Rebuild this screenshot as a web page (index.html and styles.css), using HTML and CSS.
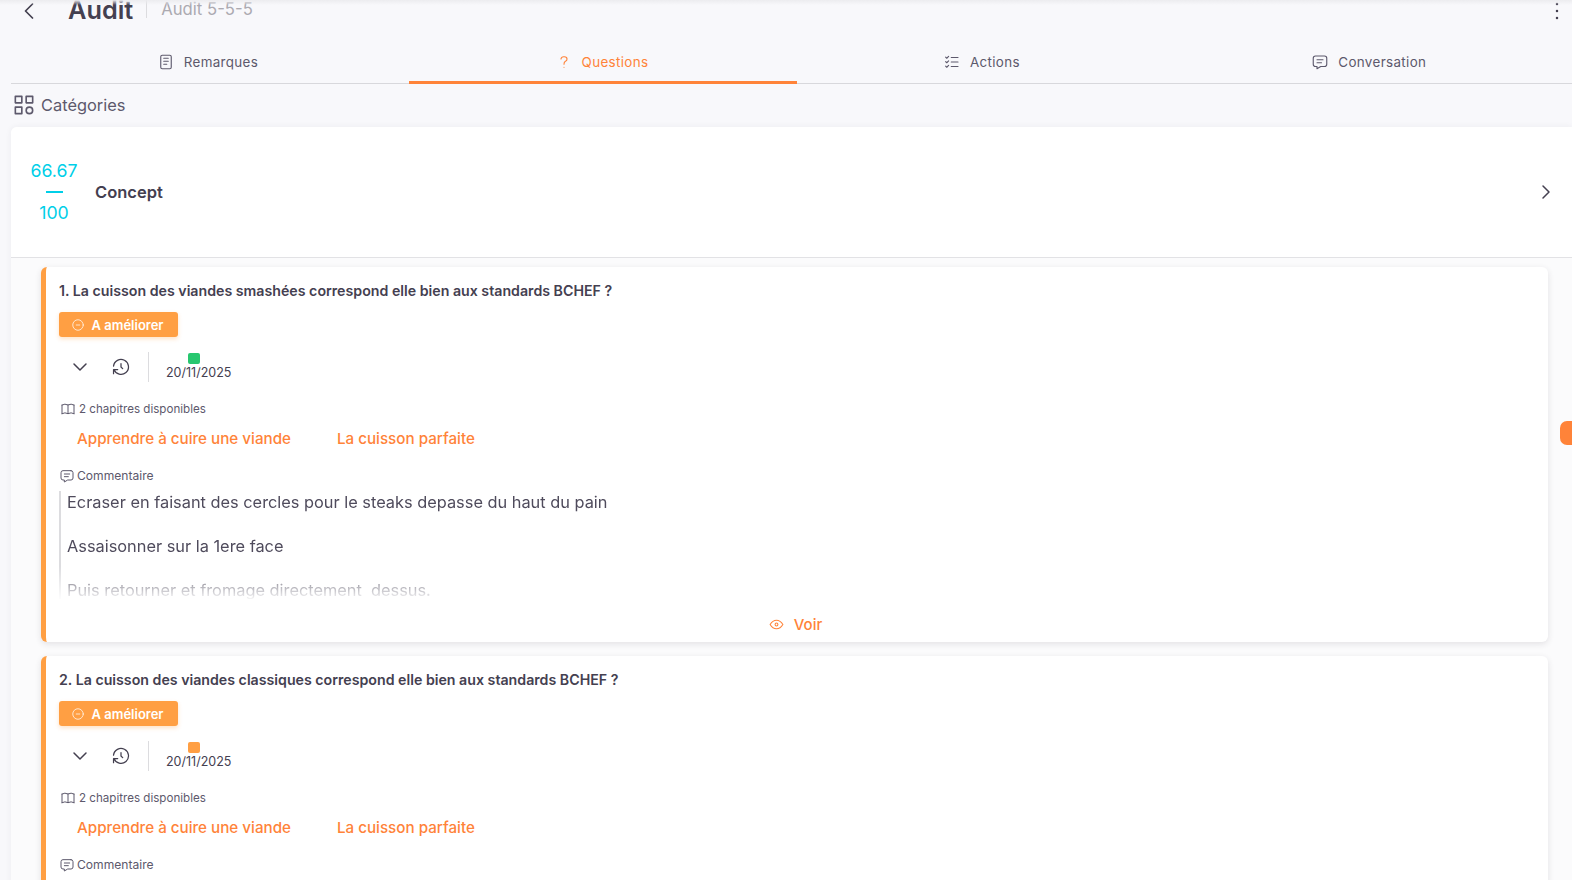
FILE: index.html
```html
<!DOCTYPE html>
<html lang="fr">
<head>
  <meta charset="UTF-8">
  <meta name="viewport" content="width=device-width, initial-scale=1.0">
  <title>Audit</title>
  <link rel="stylesheet" href="styles.css">
</head>
<body>
  <svg class="sprite" xmlns="http://www.w3.org/2000/svg">
    <symbol id="i-left" viewBox="0 0 24 24"><path d="M15 6l-6 6l6 6"/></symbol>
    <symbol id="i-right" viewBox="0 0 24 24"><path d="M9 6l6 6l-6 6"/></symbol>
    <symbol id="i-down" viewBox="0 0 24 24"><path d="M6 9l6 6l6 -6"/></symbol>
    <symbol id="i-notes" viewBox="0 0 24 24"><rect x="5" y="3" width="14" height="18" rx="2"/><path d="M9 7h6M9 11h6M9 15h4"/></symbol>
    <symbol id="i-question" viewBox="0 0 24 24"><path d="M8 8a3.5 3 0 0 1 3.5 -3h1a3.5 3 0 0 1 3.5 3a3 3 0 0 1 -2 3a3 4 0 0 0 -2 4M12 19v.01"/></symbol>
    <symbol id="i-list" viewBox="0 0 24 24"><path d="M3.5 5.5l1.5 1.5l2.5 -2.5M3.5 11.5l1.5 1.5l2.5 -2.5M3.5 17.5l1.5 1.5l2.5 -2.5M11 6h9M11 12h9M11 18h9"/></symbol>
    <symbol id="i-message" viewBox="0 0 24 24"><path d="M8 9h8M8 13h6M18 4a3 3 0 0 1 3 3v8a3 3 0 0 1 -3 3h-5l-5 3v-3h-2a3 3 0 0 1 -3 -3v-8a3 3 0 0 1 3 -3h12z"/></symbol>
    <symbol id="i-category" viewBox="0 0 24 24"><path d="M4 4h6v6h-6zM14 4h6v6h-6zM4 14h6v6h-6z"/><circle cx="17" cy="17" r="3"/></symbol>
    <symbol id="i-minus" viewBox="0 0 24 24"><circle cx="12" cy="12" r="9"/><path d="M9 12h6"/></symbol>
    <symbol id="i-history" viewBox="0 0 24 24"><path d="M12 8v4l2 2M3.05 11a9 9 0 1 1 .5 4m-.5 5v-5h5"/></symbol>
    <symbol id="i-book" viewBox="0 0 24 24"><path d="M3 19a9 9 0 0 1 9 0a9 9 0 0 1 9 0M3 6a9 9 0 0 1 9 0a9 9 0 0 1 9 0M3 6v13M12 6v13M21 6v13"/></symbol>
    <symbol id="i-eye" viewBox="0 0 24 24"><path d="M10 12a2 2 0 1 0 4 0a2 2 0 0 0 -4 0M21 12c-2.4 4 -5.4 6 -9 6c-3.6 0 -6.6 -2 -9 -6c2.4 -4 5.4 -6 9 -6c3.6 0 6.6 2 9 6"/></symbol>
    <symbol id="i-dots" viewBox="0 0 24 24"><path d="M12 5v.01M12 12v.01M12 19v.01"/></symbol>
  </svg>

  <div class="page">
    <header class="topbar">
      <svg class="icon back-icon"><use href="#i-left"/></svg>
      <h1>Audit</h1>
      <span class="subtitle">Audit 5-5-5</span>
      <svg class="icon dots-icon"><use href="#i-dots"/></svg>
    </header>

    <nav class="tabs">
      <a class="tab"><svg class="icon"><use href="#i-notes"/></svg>Remarques</a>
      <a class="tab active"><svg class="icon"><use href="#i-question"/></svg>Questions</a>
      <a class="tab"><svg class="icon"><use href="#i-list"/></svg>Actions</a>
      <a class="tab"><svg class="icon"><use href="#i-message"/></svg>Conversation</a>
    </nav>

    <div class="section-title">
      <svg class="icon"><use href="#i-category"/></svg>
      Catégories
    </div>

    <section class="category">
      <div class="category-head">
        <div class="score">
          <span>66.67</span>
          <i></i>
          <span>100</span>
        </div>
        <strong>Concept</strong>
        <svg class="icon"><use href="#i-right"/></svg>
      </div>

      <div class="questions">
        <article class="question">
          <h3>1. La cuisson des viandes smashées correspond elle bien aux standards BCHEF ?</h3>
          <span class="status"><svg class="icon"><use href="#i-minus"/></svg>A améliorer</span>
          <div class="history">
            <svg class="icon down-icon"><use href="#i-down"/></svg>
            <svg class="icon history-icon"><use href="#i-history"/></svg>
            <div class="entry">
              <i class="dot green"></i>
              <span>20/11/2025</span>
            </div>
          </div>
          <div class="label"><svg class="icon"><use href="#i-book"/></svg>2 chapitres disponibles</div>
          <div class="chapters">
            <a>Apprendre à cuire une viande</a>
            <a>La cuisson parfaite</a>
          </div>
          <div class="label comment-label"><svg class="icon"><use href="#i-message"/></svg>Commentaire</div>
          <div class="comment">
            <p>Ecraser en faisant des cercles pour le steaks depasse du haut du pain</p>
            <p>Assaisonner sur la 1ere face</p>
            <p>Puis retourner et fromage directement&nbsp; dessus.</p>
          </div>
          <a class="see"><svg class="icon"><use href="#i-eye"/></svg>Voir</a>
        </article>

        <article class="question">
          <h3>2. La cuisson des viandes classiques correspond elle bien aux standards BCHEF ?</h3>
          <span class="status"><svg class="icon"><use href="#i-minus"/></svg>A améliorer</span>
          <div class="history">
            <svg class="icon down-icon"><use href="#i-down"/></svg>
            <svg class="icon history-icon"><use href="#i-history"/></svg>
            <div class="entry">
              <i class="dot orange"></i>
              <span>20/11/2025</span>
            </div>
          </div>
          <div class="label"><svg class="icon"><use href="#i-book"/></svg>2 chapitres disponibles</div>
          <div class="chapters">
            <a>Apprendre à cuire une viande</a>
            <a>La cuisson parfaite</a>
          </div>
          <div class="label comment-label"><svg class="icon"><use href="#i-message"/></svg>Commentaire</div>
        </article>
      </div>
    </section>

    <span class="side-tab"></span>
  </div>
</body>
</html>
```

FILE: styles.css
```css
* {
  margin: 0;
  padding: 0;
  box-sizing: border-box;
}

html, body {
  height: 100%;
  overflow: hidden;
}

body {
  font-family: Inter, "Liberation Sans", sans-serif;
  background-color: #f8f8fb;
  color: #444050;
}

.sprite {
  display: none;
}

.icon {
  width: 16px;
  height: 16px;
  flex: none;
  fill: none;
  stroke: currentColor;
  stroke-width: 1.5;
  stroke-linecap: round;
  stroke-linejoin: round;
}

.page {
  position: relative;
  height: 100%;
  overflow: hidden;
  padding-left: 11px;
}

.page::before {
  content: "";
  position: absolute;
  top: 0;
  left: 0;
  right: 0;
  height: 5px;
  background: linear-gradient(#ececef, rgba(248, 248, 251, 0));
  z-index: 2;
}

/* header is scrolled a bit out of the window */
.topbar {
  display: flex;
  align-items: center;
  height: 40px;
  margin-top: -11px;
  position: relative;
}

.back-icon {
  width: 28px;
  height: 28px;
  margin-left: 4px;
  margin-top: 4px;
}

.topbar h1 {
  font-size: 25.3px;
  font-weight: 600;
  margin-left: 25px;
  margin-top: 2px;
  padding-right: 13px;
  line-height: 20px;
  height: 20px;
  position: relative;
  color: #444050;
}

.subtitle {
  font-size: 16.7px;
  color: #acaab1;
  border-left: 1px solid #dcdcdf;
  padding-left: 14px;
  line-height: 18px;
}

.dots-icon {
  width: 24px;
  height: 24px;
  margin-left: auto;
  margin-right: 3px;
  margin-top: 4px;
  stroke-width: 2.5;
}

.tabs {
  display: flex;
  height: 44px;
  margin-top: 11px;
  border-bottom: 1px solid #d8d8dc;
}

.tab {
  flex: 1 1 auto;
  display: flex;
  align-items: center;
  justify-content: center;
  gap: 9px;
  font-size: 13.4px;
  font-weight: 400;
  letter-spacing: 0.35px;
  color: #5d596c;
  border-bottom: 3px solid transparent;
  margin-bottom: -1px;
  padding: 3px 0 0;
}

.tab:first-child {
  padding-right: 5px;
}

.tab .icon {
  width: 18px;
  height: 18px;
}

.tab.active {
  padding-right: 3px;
  color: #ff8339;
  border-bottom-color: #ff8339;
}

.section-title {
  display: flex;
  align-items: center;
  gap: 4.5px;
  height: 43px;
  padding: 0 0 2px 3px;
  font-size: 16.4px;
  color: #5d596c;
}

.section-title .icon {
  width: 26px;
  height: 26px;
  margin-left: -3.5px;
}

.category {
  background-color: #fbfbfc;
  border-top-left-radius: 6px;
  box-shadow: 0 0 6px rgba(47, 43, 61, 0.06);
}

.category-head {
  display: flex;
  align-items: center;
  height: 130px;
  box-sizing: content-box;
  padding: 0 14px 0 20px;
  background-color: #fff;
  border-bottom: 1px solid #e2e2e5;
  border-top-left-radius: 6px;
}

.score {
  width: 46px;
  display: flex;
  flex-direction: column;
  align-items: center;
  margin-top: -1px;
  color: #00cfe8;
  font-size: 17.7px;
  line-height: 21px;
}

.score i {
  width: 17px;
  height: 2px;
  margin: 10px 0 9px;
  background-color: #00cfe8;
}

.category-head strong {
  flex: 1;
  margin-left: 18px;
  font-size: 16.5px;
  font-weight: 600;
}

.category-head .icon {
  width: 24px;
  height: 24px;
}

.questions {
  padding: 9px 24px 0 30px;
}

.question {
  display: flex;
  flex-direction: column;
  align-items: flex-start;
  height: 375px;
  margin-bottom: 14px;
  padding: 15px 12px 0 13px;
  background-color: #fff;
  border-left: 5px solid #ff9f43;
  border-radius: 6px;
  box-shadow: 0 2px 6px rgba(47, 43, 61, 0.12);
}

.question h3 {
  font-size: 14.2px;
  line-height: 18px;
  font-weight: 600;
}

.status {
  display: inline-flex;
  align-items: center;
  gap: 7px;
  height: 25px;
  margin-top: 12px;
  padding: 0 14px 0 11.5px;
  font-size: 13px;
  font-weight: 600;
  color: #fff;
  background-color: #ff9f43;
  border-radius: 3px;
  box-shadow: 0 2px 4px rgba(255, 159, 67, 0.3);
}

.status .icon {
  width: 14px;
  height: 14px;
  stroke-width: 1.25;
}

.history {
  display: flex;
  align-items: center;
  height: 30px;
  margin-top: 15px;
}

.down-icon {
  width: 24px;
  height: 24px;
  margin-left: 9px;
}

.history-icon {
  width: 20px;
  height: 20px;
  margin-left: 18.5px;
}

.entry {
  display: flex;
  flex-direction: column;
  align-items: center;
  height: 100%;
  margin-left: 17.5px;
  padding-left: 17px;
  border-left: 1px solid #dcdcdf;
  font-size: 12.5px;
  line-height: 16px;
}

.entry span {
  margin-top: 1px;
}

.dot {
  width: 12px;
  height: 11px;
  margin: 1px 9px 0 0;
  border-radius: 2px;
}

.dot.green {
  background-color: #28c76f;
}

.dot.orange {
  background-color: #ff9f43;
}

.label {
  display: flex;
  align-items: center;
  gap: 3px;
  margin-top: 19px;
  padding-left: 1px;
  font-size: 11.6px;
  line-height: 16px;
  color: #5d596c;
}

.comment-label {
  gap: 2px;
  margin-top: 20px;
  padding-left: 0;
  font-size: 12.1px;
}

.chapters {
  display: flex;
  gap: 46px;
  margin-top: 13px;
  padding-left: 18px;
  font-size: 15.2px;
  line-height: 18px;
  font-weight: 500;
  color: #ff8339;
}

.comment {
  width: 100%;
  height: 108px;
  margin-top: 7px;
  margin-left: 0;
  padding-left: 6px;
  border-left: 2px solid #dcdcdf;
  overflow: hidden;
  font-size: 16.35px;
  line-height: 22px;
  color: #4f4b5c;
  -webkit-mask-image: linear-gradient(#000 70%, transparent 102%);
  mask-image: linear-gradient(#000 70%, transparent 102%);
}

.comment p {
  margin-bottom: 22px;
}

.see {
  align-self: center;
  display: flex;
  align-items: center;
  gap: 9px;
  margin-top: 16px;
  margin-right: 5px;
  font-size: 15px;
  font-weight: 500;
  color: #ff8339;
}

.see .icon {
  width: 17px;
  height: 17px;
}

.side-tab {
  position: absolute;
  top: 421px;
  right: -8px;
  width: 20px;
  height: 24px;
  background-color: #ff8339;
  border-radius: 7px;
}
```
